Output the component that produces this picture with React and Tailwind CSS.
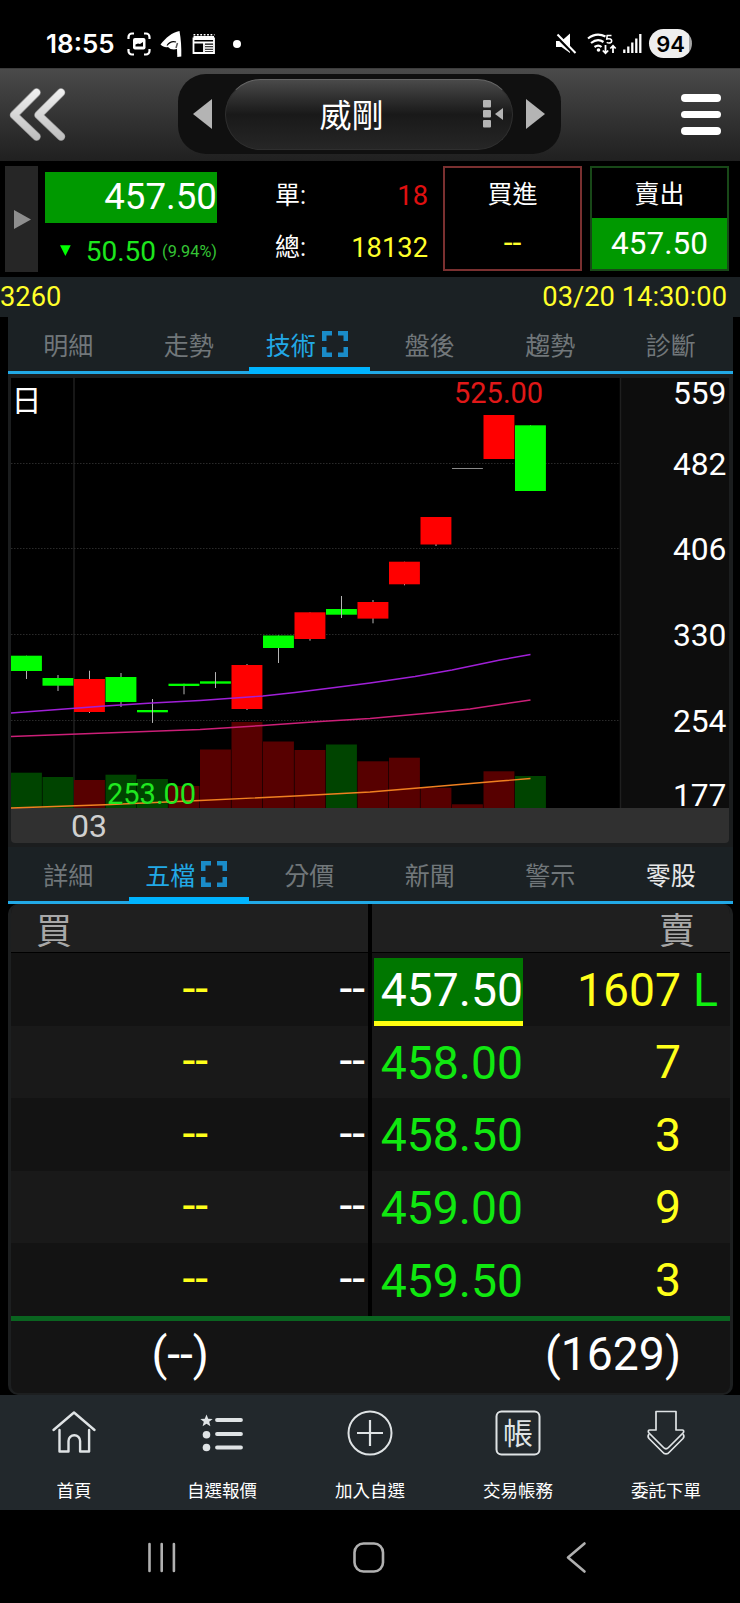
import { clsx } from "clsx";

const candles = [
  { up: false, top: 655.7, bottom: 671, high: 655.7, low: 679, vol: 772.7 },
  { up: false, top: 678, bottom: 685.7, high: 675, low: 691, vol: 777 },
  { up: true, top: 679, bottom: 712, high: 670.7, low: 713, vol: 780 },
  { up: false, top: 677, bottom: 702, high: 673, low: 707, vol: 774.7 },
  { up: false, top: 710, bottom: 712.3, high: 699, low: 722.7, vol: 779 },
  { up: false, top: 683.7, bottom: 686, high: 683.7, low: 694.3, vol: 786, volUp: true },
  { up: false, top: 681.3, bottom: 683.7, high: 672.3, low: 688, vol: 749.5, volUp: true },
  { up: true, top: 665, bottom: 709, high: 664, low: 710, vol: 722 },
  { up: false, top: 635.5, bottom: 648, high: 635.5, low: 663, vol: 741.5, volUp: true },
  { up: true, top: 612.3, bottom: 639, high: 612.3, low: 640.7, vol: 750 },
  { up: false, top: 609, bottom: 614.7, high: 596, low: 618, vol: 744.5 },
  { up: true, top: 602, bottom: 618.6, high: 600, low: 623.3, vol: 761.3 },
  { up: true, top: 561.7, bottom: 584.3, high: 561.7, low: 585.3, vol: 757.7 },
  { up: true, top: 517, bottom: 544.5, high: 517, low: 546, vol: 787.7 },
  { flat: true, top: 468, bottom: 469, high: 468, low: 469, vol: 804.3, volUp: true },
  { up: true, top: 415, bottom: 459, high: 415, low: 459, vol: 771.3 },
  { up: false, top: 425.3, bottom: 491, high: 425.3, low: 491, vol: 776 },
];

const priceTicks = [
  { value: 559, y: 403.5 },
  { value: 482, y: 474.5 },
  { value: 406, y: 560 },
  { value: 330, y: 645.5 },
  { value: 254, y: 731.5 },
  { value: 177, y: 805.5 },
];

const asks = [
  { price: "457.50", qty: "1607", mark: "L" },
  { price: "458.00", qty: "7" },
  { price: "458.50", qty: "3" },
  { price: "459.00", qty: "9" },
  { price: "459.50", qty: "3" },
];

function candleColor(c) {
  if (c.flat) return "#8a8a8a";
  return c.up ? "#ff0000" : "#00ff00";
}

function StatusBar() {
  return (
    <div className="flex h-[68px] items-center pt-[19px] pr-[48px] pl-[46px] text-white">
      <span className="w-[81px] pt-px font-['Inter'] text-[26px] leading-none font-semibold">18:55</span>
      <svg className="h-[28px] w-[118px]" viewBox="127 30 118 28" fill="none" stroke="#fff">
        <path d="M128.500 39v-2a3.500 3.500 0 0 1 3.500-3.500h2M144 33.500h2a3.500 3.500 0 0 1 3.500 3.500v2M149.500 49v2a3.500 3.500 0 0 1-3.500 3.500h-2M134 54.500h-2a3.500 3.500 0 0 1-3.500-3.500v-2" strokeWidth="2.200" />
        <rect x="133" y="38" width="12.500" height="11.500" rx="2" fill="#fff" stroke="none" />
        <path d="M135.500 46.500v-2l2.500-1 2 .5 3-2v4.500z" fill="#000" stroke="none" />
        {/* swoosh-shaped A */}
        <path d="M160.500 44.500C166 37.500 172 32.500 179.500 31c1.500 8 2 17 1.800 25.500l-4 .5-.3-8c-3 1-7 .5-9-2-2.500.5-5 0-7.500-2.500z" fill="#fff" stroke="none" />
        <path d="M167 45.500c2.500-3.500 6-4.500 9-3.500" stroke="#000" strokeWidth="1.200" />
        <path d="M177.500 43l-1.500 5" stroke="#555" strokeWidth="1.500" />
        <path d="M193.500 37.500v15.500h20.500v-15.500M193.500 42.500h20.500M204 43v10" strokeWidth="1.800" />
        <path d="M193.500 38h20.500" strokeWidth="4" />
        <path d="M193.500 34.800h21" strokeWidth="1.600" strokeDasharray="1.800 1.600" />
        <path d="M205 45.500h8M205 48h8M205 50.500h8" strokeWidth="1.300" />
        <circle cx="237" cy="44" r="4" fill="#fff" stroke="none" />
      </svg>
      <svg className="ml-auto h-[28px] w-[88px]" viewBox="555 30 88 28" fill="none" stroke="#fff">
        <path d="M556 41h5.500l8.500-7.500v19.500l-8.500-6H556z" fill="#fff" stroke="none" />
        <path d="M555 35l20 20" stroke="#000" strokeWidth="2.500" />
        <path d="M557.500 34.500l18 18.500" strokeWidth="2" />
        <path d="M588 38.500c6-4.800 12-4.800 17.500-2M591 43c4.500-3.500 9-3.500 12.500-1M594.500 47c2.500-1.800 5-1.800 7 0" strokeWidth="2.200" />
        <circle cx="598.500" cy="50" r="1.800" fill="#fff" stroke="none" />
        <path d="M611.500 35.500h-4.300l-.4 3.500c3-.8 4.900.1 4.900 1.900 0 2-2.700 2.800-5 1.500" strokeWidth="1.600" />
        <path d="M605.500 45v8M602.800 50.500l2.700 2.800 2.700-2.800M613 53v-7M610.300 48.500l2.700-2.800 2.700 2.800" strokeWidth="1.800" />
        <path d="M624.300 49.500v3.500M628.300 46.500v6.500M632.300 42.500v10.500M636.300 38.500v14.500M640.300 34v19" strokeWidth="2.300" />
      </svg>
      <div className="ml-[6px] flex h-[29px] w-[43px] items-center justify-center rounded-full bg-linear-to-r from-[#eeeeee] from-92% to-[#a5a5a5] to-92% font-['Inter'] text-[22px] leading-none font-semibold text-black">
        94
      </div>
    </div>
  );
}

function Header() {
  return (
    <div className="flex h-[93px] items-center border-t border-[#3c3c3c] bg-linear-to-b from-[#4a4a4a] to-[#202020] pl-[8px]">
      <svg className="h-[56px] w-[60px]" viewBox="8 87 60 56" fill="none" strokeLinecap="round" strokeLinejoin="round">
        <defs>
          <linearGradient id="steel" gradientUnits="userSpaceOnUse" x1="0" y1="88" x2="0" y2="141">
            <stop offset="0" stopColor="#f2f2f2" />
            <stop offset="1" stopColor="#bcbcbc" />
          </linearGradient>
        </defs>
        <path d="M36.500 92.500L14 115l22.500 21.500M61 92.500L38.500 115 61 136.500" stroke="#999" strokeWidth="8.500" />
        <path d="M36.500 92.500L14 115l22.500 21.500M61 92.500L38.500 115 61 136.500" stroke="url(#steel)" strokeWidth="7" />
      </svg>
      <div className="mb-[2px] ml-[110px] flex h-[80px] w-[383px] items-center rounded-[28px] bg-[#101010] pr-[16px] pl-[15px]">
        <svg className="h-[30px] w-[19px]" viewBox="0 0 19 30">
          <path d="M0 15L19 0v30z" fill="#b4b4b4" />
        </svg>
        <div className="ml-[13px] flex h-[71px] w-[288px] items-center rounded-full border border-[#2f2f2f] border-t-[#666] bg-linear-to-b from-[#4a4a4a] via-[#191919] via-50% to-[#262626] pr-[9px]">
          <span className="flex-1 pt-[4px] pr-[6px] text-center text-[32px] leading-none text-white">威剛</span>
          <svg className="h-[28px] w-[20px]" viewBox="483 99.500 20 28" fill="#b4b4b4">
            <rect x="483" y="99.500" width="8" height="7.500" rx="1" />
            <rect x="483" y="109.500" width="8" height="7.500" rx="1" />
            <rect x="483" y="119.500" width="8" height="7.500" rx="1" />
            <path d="M495 113.500l8-6v12z" />
          </svg>
        </div>
        <svg className="ml-auto h-[30px] w-[19px]" viewBox="0 0 19 30">
          <path d="M19 15L0 0v30z" fill="#b4b4b4" />
        </svg>
      </div>
      <div className="mr-[19px] mb-px ml-auto flex w-[40px] flex-col gap-[9px]">
        <div className="h-[7.500px] rounded-full bg-white" />
        <div className="h-[7.500px] rounded-full bg-white" />
        <div className="h-[7.500px] rounded-full bg-white" />
      </div>
    </div>
  );
}

function QuoteSummary() {
  return (
    <div className="flex h-[116px] items-start pl-[5px] leading-none">
      <div className="mt-[5px] flex h-[106px] w-[33px] items-center justify-center bg-[#262626] pl-px">
        <svg className="h-[19px] w-[17px]" viewBox="0 0 17 19">
          <path d="M0 0l17 9.500L0 19z" fill="#8e8e8e" />
        </svg>
      </div>

      <div className="ml-[7px] w-[172px] pt-[11px]">
        <div className="flex h-[51px] items-center justify-end bg-[#009900] text-[36.700px] text-white">457.50</div>
        <div className="mt-[15px] flex items-center whitespace-nowrap">
          <svg className="mb-[3px] ml-[15px] h-[15px] w-[15px]" viewBox="0 0 15 15">
            <path d="M0 0h15L7.500 15z" fill="#00ff00" />
          </svg>
          <span className="ml-[15px] text-[28px] text-[#1de61d]">50.50</span>
          <span className="ml-[6px] text-[16.300px] text-[#35c435]">(9.94%)</span>
        </div>
      </div>

      <div className="ml-[58px] w-[153px] pt-[20px]">
        <div className="flex items-center justify-between">
          <span className="text-[25px] text-white">單:</span>
          <span className="pt-[2px] text-[27.300px] text-[#e01010]">18</span>
        </div>
        <div className="mt-[23px] flex items-center justify-between">
          <span className="text-[25px] text-white">總:</span>
          <span className="pt-[2px] text-[27.300px] text-[#ffff2a]">18132</span>
        </div>
      </div>

      <div className="mt-[5px] ml-[15px] flex h-[105px] w-[139px] flex-col border-2 border-[#7a3030] text-center">
        <div className="flex h-[51px] items-center justify-center pt-px text-[25px] text-white">買進</div>
        <div className="flex flex-1 items-center justify-center pb-[4px] text-[32px] text-[#ffff2a]">--</div>
      </div>
      <div className="mt-[5px] ml-[8px] flex h-[105px] w-[139px] flex-col border-2 border-[#184818] text-center">
        <div className="flex h-[50px] items-center justify-center pt-[2px] text-[25px] text-white">賣出</div>
        <div className="flex flex-1 items-center justify-center bg-[#009900] pt-px text-[31.500px] text-white">457.50</div>
      </div>
    </div>
  );
}

function ExpandIcon() {
  return (
    <svg className="h-[26px] w-[26px]" viewBox="0 0 26 26" fill="none" stroke="#1a8cc8" strokeWidth="4.500">
      <path d="M2.250 10V2.250H10M16 2.250h7.750V10M23.750 16v7.750H16M10 23.750H2.250V16" />
    </svg>
  );
}

function Tabs({ items, active, bright }) {
  return (
    <div className="mr-[7px] ml-[8px] flex h-[57px] border-b-[3px] border-[#22a9e6] bg-[#1b2124] pr-[2px]">
      {items.map((label) => (
        <div
          key={label}
          className={clsx(
            "mb-[-3px] flex w-1/6 items-center justify-center gap-[6px] pt-[4px] text-[25px] leading-none",
            label === active ? "border-b-[7px] border-[#00b4ff] pr-[5px] text-[#22a9e6]" : "pb-[7px]",
            label === bright && "text-[#e8e8e8]",
            label !== active && label !== bright && "text-[#71777a]"
          )}
        >
          <span className="pt-[4px]">{label}</span>
          {label === active && <ExpandIcon />}
        </div>
      ))}
    </div>
  );
}

function Chart() {
  return (
    <svg className="block h-[473px] w-[740px]" viewBox="0 374 740 473">
      <rect x="8" y="374" width="725" height="473" fill="#1b1d1e" />
      <rect x="11" y="378" width="718" height="430" fill="#000" />
      <rect x="620" y="378" width="109" height="430" fill="#0d0d0d" />
      <path d="M11 808h718v31a4 4 0 0 1-4 4H15a4 4 0 0 1-4-4z" fill="#303030" />

      {/* grid */}
      <path d="M74 378v430M620.500 378v430" stroke="#1f1f1f" strokeWidth="1.500" />
      <path d="M11 463.500h609M11 548.500h609M11 634.500h609M11 720.500h609" stroke="#2a2a2a" strokeDasharray="1.500 1.500" />

      {candles.map((c, i) => {
        const x = 11 + i * 31.5;
        return (
          <g key={i}>
            <rect x={x} y={c.vol} width="30.900" height={808 - c.vol} fill={c.up || c.volUp ? "#570000" : "#004400"} />
            <rect x={x + 15} y={c.high} width="1" height={c.low - c.high} fill="#b4b4b4" />
            <rect x={x} y={c.top} width="30.900" height={c.bottom - c.top} fill={candleColor(c)} />
          </g>
        );
      })}
      {/* wicks of the thin bodies run across them */}
      <path d="M152.500 699v23.700M215.500 672.300v15.700M341.500 596v22" stroke="#b4b4b4" />

      {/* moving averages */}
      <g fill="none" strokeWidth="1.400">
        <path d="M11 713L58 709.500 105 706 152 703 200 700.500 263 696 295 692.500 335 687.500 370 683 415 676.500 452 670 500 660 530.500 654.500" stroke="#a020d8" />
        <path d="M11 736.500L105 733 200 729.500 263 725.500 320 721.500 370 718.500 430 713 470 709 500 704.500 530.500 700" stroke="#cc1f78" />
        <path d="M11 808L105 804.700 200 800.500 295 796 370 792 430 787 500 781 530.500 778.500" stroke="#f08020" />
      </g>

      <g fontFamily="Roboto, 'Noto Sans CJK TC', sans-serif">
        <text x="11.500" y="411" fontSize="30" fill="#fff">日</text>
        <text x="454" y="402.700" fontSize="29" fill="#e01818">525.00</text>
        <text x="107" y="804" fontSize="29" fill="#20e820">253.00</text>
        <text x="71" y="837" fontSize="32" fill="#d0d0d0">03</text>
        {priceTicks.map((t) => (
          <text key={t.value} x="726.500" y={t.y} fontSize="31.800" fill="#fff" textAnchor="end">{t.value}</text>
        ))}
      </g>
    </svg>
  );
}

function OrderBook() {
  return (
    <div className="mr-[7px] ml-[8px] h-[491px] overflow-hidden rounded-[10px] border-[3px] border-t-0 border-b-2 border-[#1d1f20] bg-[#141414] leading-none">
      <div className="flex h-[49px] border-b border-black bg-[#1f1f1f] text-[36px] text-[#a8a8a8]">
        <div className="flex w-[357px] items-center pt-[8px] pl-[25px]">買</div>
        <div className="w-[4px] bg-black" />
        <div className="flex flex-1 items-center justify-end pt-[8px] pr-[35px]">賣</div>
      </div>
      {asks.map((row, i) => (
        <div key={row.price} className={clsx("flex h-[72.600px] text-[46.300px]", i % 2 ? "bg-[#191919]" : "bg-[#131313]")}>
          <div className="flex w-[357px] items-center justify-end pr-[3px] pb-[3px]">
            <span className="text-[#ffff1a]">--</span>
            <span className="w-[157px] text-right text-white">--</span>
          </div>
          <div className="w-[4px] bg-black" />
          <div
            className={clsx(
              "ml-[2px] flex w-[149px] items-center justify-end pt-[2px]",
              i === 0 ? "mt-[5px] border-b-[5px] border-[#ffff10] bg-[#007700] text-white" : "text-[#10e810]"
            )}
          >
            {row.price}
          </div>
          <div className="flex flex-1 items-center justify-end pt-px text-[#ffff1a]">{row.qty}</div>
          <div className="flex w-[49px] items-center pt-px pl-[12px] text-[#10f010]">{row.mark}</div>
        </div>
      ))}
      <div className="h-[5px] bg-[#0a6420]" />
      <div className="flex h-[71px] items-center pb-[4px] text-[46.300px] text-white">
        <span className="w-[198px] text-right">(--)</span>
        <span className="flex-1 pr-[49px] text-right">(1629)</span>
      </div>
    </div>
  );
}

const navIcons = {
  home: (
    <g strokeWidth="2.400" strokeLinecap="round" strokeLinejoin="round">
      <path d="M3.500 21L24 3.500 44.500 21" />
      <path d="M9.500 21v21.500h9V32a5.800 5.800 0 0 1 11.600 0v10.500h9V21" />
    </g>
  ),
  watchlist: (
    <g strokeWidth="3.800" strokeLinecap="round">
      <path d="M19 11h24M19 25h24M19 38.500h24" />
      <g fill="#dfe3e5" stroke="none">
        <path d="M8.500 5.500l1.700 4.200 4.500.2-3.500 2.800 1.200 4.500-3.900-2.500-3.900 2.500 1.200-4.500-3.500-2.800 4.500-.2z" />
        <circle cx="8.500" cy="25.700" r="3.800" />
        <circle cx="8.500" cy="38.500" r="3.800" />
      </g>
    </g>
  ),
  add: (
    <g strokeWidth="2">
      <circle cx="24" cy="24" r="21.500" />
      <path d="M24 11v26M11 24h26" strokeWidth="2.200" />
    </g>
  ),
  account: (
    <g strokeWidth="2">
      <rect x="2.500" y="2.500" width="43" height="43" rx="5" />
      <text x="24" y="34.500" fontSize="30" fill="#dfe3e5" stroke="none" textAnchor="middle" fontFamily="'Noto Sans CJK TC', sans-serif">帳</text>
    </g>
  ),
  order: (
    <g strokeWidth="1.700" strokeLinejoin="round">
      <path d="M14 2.500h20V21h6.500c1.500 0 1.500 2 .5 3L26.500 38.500c-1.500 1.500-3.500 1.500-5 0L7 24c-1-1-1-3 .5-3H14z" />
      <path d="M7 25c-1.200 1.500-1.200 3 0 4.500L20.500 43c2 2.500 5 2.500 7 0L41 29.500c1.200-1.500 1.200-3 0-4.500" />
    </g>
  ),
};

const navItems = [
  { icon: "home", label: "首頁" },
  { icon: "watchlist", label: "自選報價" },
  { icon: "add", label: "加入自選" },
  { icon: "account", label: "交易帳務" },
  { icon: "order", label: "委託下單" },
];

function BottomNav() {
  return (
    <div className="flex h-[115px] bg-[#22282c]">
      {navItems.map((item) => (
        <div key={item.icon} className="flex flex-1 flex-col items-center pt-[14px]">
          <svg className="h-[48px] w-[48px]" viewBox="0 0 48 48" fill="none" stroke="#dfe3e5">
            {navIcons[item.icon]}
          </svg>
          <span className="mt-[26px] text-[17.500px] leading-none text-white">{item.label}</span>
        </div>
      ))}
    </div>
  );
}

function SystemNav() {
  return (
    <svg className="block h-[93px] w-[740px]" viewBox="0 1510 740 93" fill="none" stroke="#b0b0b0" strokeWidth="2.600" strokeLinecap="round">
      <path d="M149.500 1544v27M161.700 1544v27M173.900 1544v27" />
      <rect x="354.500" y="1543.500" width="28.500" height="28" rx="9" />
      <path d="M584.500 1543.500L568 1557.500 584.500 1571.500" strokeLinejoin="round" />
    </svg>
  );
}

export default function App() {
  return (
    <div className="h-[1603px] w-[740px] overflow-hidden bg-black font-['Roboto','Noto_Sans_CJK_TC',sans-serif]">
      <StatusBar />
      <Header />
      <QuoteSummary />
      <div className="flex h-[40px] items-center justify-between bg-[#1b2124] pt-[2px] pr-[13px] text-[27.300px] leading-none text-[#ffff2a]">
        <span>3260</span>
        <span>03/20 14:30:00</span>
      </div>
      <Tabs items={["明細", "走勢", "技術", "盤後", "趨勢", "診斷"]} active="技術" />
      <Chart />
      <Tabs items={["詳細", "五檔", "分價", "新聞", "警示", "零股"]} active="五檔" bright="零股" />
      <OrderBook />
      <BottomNav />
      <SystemNav />
    </div>
  );
}
